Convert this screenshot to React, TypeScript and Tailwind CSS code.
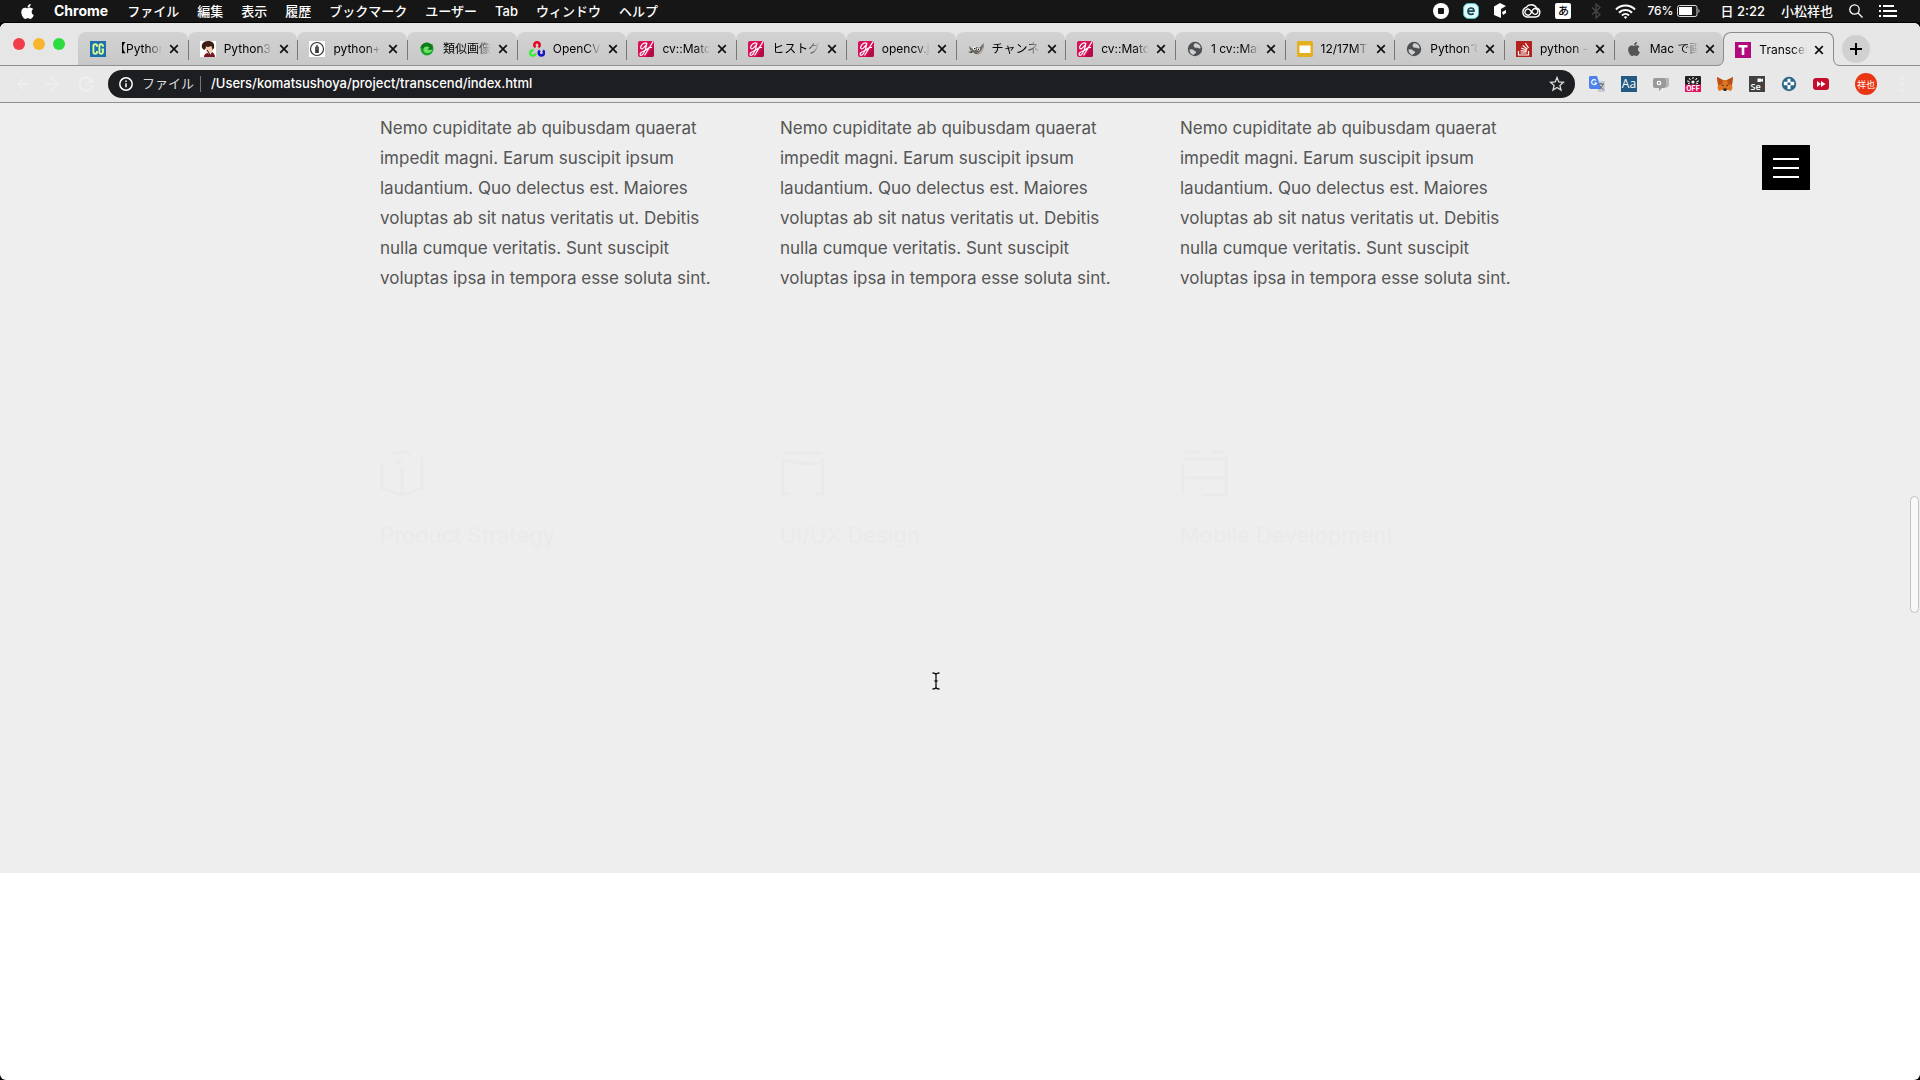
import React from 'react';

const UI = "font-['Inter','Noto_Sans_CJK_JP',sans-serif]";

function AppleMark({ className }: { className: string }) {
  return (
    <svg viewBox="0 0 384 512" className={className} fill="currentColor" aria-hidden="true">
      <path d="M318.7 268.7c-.2-36.7 16.4-64.4 50-84.8-18.8-26.9-47.2-41.7-84.7-44.6-35.5-2.8-74.3 20.7-88.5 20.7-15 0-49.4-19.7-76.4-19.7C63.3 141.2 4 184.8 4 273.5q0 39.3 14.4 81.2c12.8 36.7 59 126.7 107.2 125.2 25.2-.6 43-17.9 75.8-17.9 31.8 0 48.3 17.9 76.4 17.9 48.6-.7 90.4-82.5 102.6-119.3-65.2-30.7-61.7-90-61.7-91.9zm-56.6-164.2c27.3-32.4 24.8-61.9 24-72.5-24.1 1.4-52 16.4-67.9 34.9-17.5 19.8-27.8 44.3-25.6 71.9 26.1 2 49.9-11.4 69.5-34.3z" />
    </svg>
  );
}

const G = () => (
  <svg viewBox="0 0 16 16" className="size-4">
    <rect width="16" height="16" rx="2" fill="#d8105a" />
    <path d="M8 16L16 5v9a2 2 0 0 1-2 2z" fill="#b30a48" />
    <path d="M8.800 2.600C7.500.8 4 2.500 2.800 5.500c-.8 2.500 1.200 3 3 1.200L8.600 3.500C8 7 6.500 12 4 14c-1.800 1.200-2.800-.8-1-2.500C5 10 8 9.500 10 7.500M14.800 1L6.800 14M13.500 6.500c-1.800-.6-3.500.6-4 2.500" fill="none" stroke="#fff" strokeWidth="1.200" strokeLinecap="round" />
  </svg>
);

const Globe = () => (
  <svg viewBox="0 0 16 16" className="size-4">
    <circle cx="8" cy="8" r="7.200" fill="#4c4f54" />
    <path d="M2.500 8.500c2-.6 3.500-.2 4.500 1 .8 1 2.500.5 2 2-.4 1-2 1.500-2.500 2.500C4 13.500 2.300 11 2.500 8.500zM7.500 2.500c2-.6 5 .5 6 3.500.3 1.500-1 2-2 1.200-1-.9-2-.3-3.500-.7C6.500 6 6 4.500 7.500 2.500z" fill="#cfcfcf" />
  </svg>
);

const icons: Record<string, React.ReactNode> = {
  g: <G />,
  globe: <Globe />,
  cg: (
    <svg viewBox="0 0 16 16" className="size-4">
      <rect width="16" height="16" fill="#1c6fa8" />
      <path d="M7 5.800V5a1.800 1.800 0 0 0-3.600 0v6A1.800 1.800 0 0 0 7 11v-1M13 5.800V5a1.800 1.800 0 0 0-3.600 0v6a1.800 1.800 0 0 0 3.600 0V8.500h-1.500" fill="none" stroke="#d8fb9a" strokeWidth="1.900" />
    </svg>
  ),
  face: (
    <svg viewBox="0 0 16 16" className="size-4">
      <rect width="16" height="16" fill="#fff" />
      <path d="M5 5h8v4l-2 3H7z" fill="#f3cdb4" />
      <path d="M2 7c-1-4 1.500-7 6-7s7 2.500 6 7l-1.500 2-1-4L8 6 6 5.500 5.500 8 4 9z" fill="#3e1d14" />
      <path d="M4 16c0-3 2-4 4-4l2 2 2-3c2 1 3 3 3 5z" fill="#7c1620" />
      <path d="M7 9l2 3 1 2" stroke="#2a1414" fill="none" />
    </svg>
  ),
  pen: (
    <svg viewBox="0 0 16 16" className="size-4">
      <rect width="16" height="16" fill="#fff" />
      <circle cx="8" cy="8" r="6.500" fill="none" stroke="#333" strokeWidth="1.200" />
      <path d="M8 3.500l1.800 3V12H6.200V6.500z" fill="#333" />
      <path d="M8 5v4" stroke="#aaa" strokeWidth=".6" />
    </svg>
  ),
  green: (
    <svg viewBox="0 0 16 16" className="size-4">
      <circle cx="8" cy="8" r="6.500" fill="#17a52b" />
      <path d="M1.500 7C2 2.500 8 0 12 3.500l1.500-.5V8.500H8L10.500 6.500C9 5 6 5.500 5 8z" fill="#0e7a1e" />
      <path d="M4.500 7.500c1.500-2.500 4-2.500 6-1L8.500 8.500c2 1 3.500.5 5 0-1 3.500-6 5-8.500 2z" fill="#6fdd63" />
    </svg>
  ),
  opencv: (
    <svg viewBox="0 0 16 16" className="size-4" fill="none" strokeWidth="2.500">
      <path d="M6.500 6.200A2.700 2.700 0 1 1 9.500 6.200" stroke="#e8001c" />
      <path d="M4.600 9.300A2.700 2.700 0 1 0 6.500 12.500" stroke="#35ee35" />
      <path d="M10.800 9.600A2.700 2.700 0 1 0 14 9.600" stroke="#1414c8" />
    </svg>
  ),
  gimp: (
    <svg viewBox="0 0 16 16" className="size-4">
      <path d="M1 5l3 2.500L8 6l4 .5L15.500 2c.5 5-.5 9-4 11-3.500 1-6-.5-7-3L2 9z" fill="#6c675e" />
      <path d="M9 12c3 0 5-3 6-7 .5 4-1 7-4 8z" fill="#bdb9b0" />
      <circle cx="6.500" cy="7.500" r="1.700" fill="#fff" /><circle cx="10.500" cy="8" r="1.500" fill="#fff" />
      <circle cx="6.800" cy="7.600" r=".8" /><circle cx="10.500" cy="8.200" r=".7" />
      <path d="M0 11l5-1-1 2z" fill="#222" />
    </svg>
  ),
  slides: (
    <svg viewBox="0 0 16 16" className="size-4">
      <rect width="16" height="16" rx="1.500" fill="#e5b01f" />
      <rect x="2.500" y="4.500" width="11" height="7.500" fill="#fff" />
    </svg>
  ),
  stack: (
    <svg viewBox="0 0 16 16" className="size-4" fill="none" stroke="#fff" strokeWidth="1.200">
      <rect width="16" height="16" fill="#b3221f" stroke="none" />
      <path d="M2.500 10v4h10v-4M4.500 12h6M4.600 9.600l6 .8M5.200 7l5.600 2.200M6.800 4.500l4.600 3.700M9.300 2l3.200 5" />
    </svg>
  ),
  apple: <AppleMark className="h-4 w-4 text-[#555]" />,
  t: (
    <svg viewBox="0 0 16 16" className="size-4">
      <rect width="16" height="16" fill="#b3097f" />
      <path d="M3.500 3h9v2.500H9.300V13H6.700V5.500H3.500z" fill="#fff" />
    </svg>
  ),
};

const tabs: [string, string][] = [
  ['cg', '【Python'], ['face', 'Python3'], ['pen', 'python+'], ['green', '類似画像'],
  ['opencv', 'OpenCV'], ['g', 'cv::Mato'], ['g', 'ヒストグ'], ['g', 'opencv.j'],
  ['gimp', 'チャンネ'], ['g', 'cv::Mato'], ['globe', '1 cv::Mat'], ['slides', '12/17MT'],
  ['globe', 'Pythonで'], ['stack', 'python -'], ['apple', 'Mac で画'], ['t', 'Transcen'],
];

function MenuBar() {
  const items = ['ファイル', '編集', '表示', '履歴', 'ブックマーク', 'ユーザー', 'Tab', 'ウィンドウ', 'ヘルプ'];
  return (
    <header className="flex h-[23px] items-center border-b border-black bg-[#161616] pr-[23px] pl-5 text-[13px] leading-none font-medium text-white">
      <AppleMark className="mr-[19px] h-[17px] w-[15px]" />
      <nav className="flex items-center gap-[18px]">
        <a href="#chrome" className="mr-px text-sm leading-none font-bold">Chrome</a>
        {items.map((i) => <a key={i} href={'#' + i} className="whitespace-nowrap">{i}</a>)}
      </nav>
      <div className="ml-auto flex items-center">
        <svg viewBox="0 0 16 16" className="mr-3.5 size-4"><circle cx="8" cy="8" r="8" fill="#fff" /><rect x="5" y="5" width="6" height="6" rx="1" fill="#161616" /></svg>
        <svg viewBox="0 0 16 16" className="mr-3.5 size-4">
          <rect x=".5" y=".5" width="15" height="15" rx="5" fill="#dffafa" stroke="#4cc3c9" />
          <path d="M5 8.200h6C11 6 9.800 5 8 5S5 6.300 5 8.200s1.200 3.100 3 3.100c1.200 0 2-.3 2.700-1" fill="none" stroke="#174a52" strokeWidth="1.700" />
        </svg>
        <svg viewBox="0 0 14 16" className="mr-3.5 h-4 w-3.5" fill="#fff"><path d="M7 0l6 3-5 3v9L1 12V3.500zM9 9l4-2v3l-3 2z" /></svg>
        <svg viewBox="0 0 20 14" className="mr-3.5 h-3.5 w-5" fill="none" stroke="#fff" strokeWidth="1.400">
          <path d="M5.800 13a5 5 0 0 1-.6-9.600A6 6 0 0 1 15.500 4 4.600 4.600 0 0 1 14.500 13z" />
          <path d="M9.500 9.800A3 3 0 1 1 8.500 5.500l4 4.300a2.800 2.800 0 1 0-.5-4.300L9.500 9.800" strokeWidth="1.300" />
        </svg>
        <span className="mr-5 grid size-4 place-items-center rounded-xs bg-white text-[11px] leading-none text-black">あ</span>
        <svg viewBox="0 0 10 16" className="mr-3.5 h-4 w-2.5" fill="none" stroke="#4a4a4a" strokeWidth="1.200"><path d="M1 4.500l8 7L5 15V1l4 3.500-8 7" /></svg>
        <svg viewBox="0 0 21 15" className="mr-[11px] h-[15px] w-[21px]" fill="none" stroke="#fff" strokeWidth="2">
          <path d="M1 5.500a13.500 13.500 0 0 1 19 0M4 8.700a9 9 0 0 1 13 0M7 11.500a5 5 0 0 1 7 0" /><path d="M8.800 13l1.700 2 1.700-2a2.500 2.500 0 0 0-3.400 0z" fill="#fff" stroke="none" />
        </svg>
        <span className="mr-[3px] text-xs leading-none">76%</span>
        <svg viewBox="0 0 24 12" className="mr-5 h-3 w-6"><rect x=".5" y=".5" width="19.500" height="11" rx="2" fill="none" stroke="#ddd" /><rect x="2" y="2" width="13" height="8" fill="#fff" /><path d="M21.500 4v4c1.300-.5 1.300-3.500 0-4z" fill="#ddd" /></svg>
        <time className="mr-4 whitespace-nowrap">日 2:22</time>
        <span className="mr-4 whitespace-nowrap">小松祥也</span>
        <svg viewBox="0 0 14 14" className="mr-4 size-3.5" fill="none" stroke="#fff" strokeWidth="1.300"><circle cx="5.500" cy="5.500" r="4.700" /><path d="M9 9l4.500 4.500" /></svg>
        <svg viewBox="0 0 18 12" className="h-3 w-[18px]" fill="none" stroke="#fff" strokeWidth="2"><path d="M0 1h2M4 1h11M0 6h2M4 6h14M0 11h2M4 11h14" /></svg>
      </div>
    </header>
  );
}

function Tab({ icon, title, index }: { icon: string; title: string; index: number }) {
  const active = index === tabs.length - 1;
  return (
    <div className={active
      ? 'relative z-10 -mb-px flex h-[34px] min-w-0 flex-1 items-center rounded-t-lg border border-b-0 border-[#8c8c8c] bg-[#e8e8e8] pl-[11px]'
      : 'relative flex h-[33px] min-w-0 flex-1 items-center rounded-t-lg bg-linear-to-b from-[#d2d2d2] to-[#c8c8c8] pl-3'}>
      {index > 0 && !active && <i className="absolute top-2 left-0 h-5 w-px bg-[#777]" />}
      {active && (
        <>
          <svg viewBox="0 0 7 8" className="absolute bottom-0 -left-[7px] h-2 w-[7px]"><path d="M0 8V7.500Q6.500 7.500 6.500 0H7.500V8z" fill="#e8e8e8" /><path d="M0 7.500Q6.500 7.500 6.500 0" fill="none" stroke="#8c8c8c" /></svg>
          <svg viewBox="0 0 7 8" className="absolute -right-[7px] bottom-0 h-2 w-[7px]"><path d="M7 8V7.500Q.5 7.500 .5 0H-.5V8z" fill="#e8e8e8" /><path d="M7 7.500Q.5 7.500 .5 0" fill="none" stroke="#8c8c8c" /></svg>
        </>
      )}
      <span className="shrink-0">{icons[icon]}</span>
      <button className="ml-2 w-12 overflow-hidden mask-r-from-70% text-left text-xs leading-5 whitespace-nowrap text-black">{title}</button>
      <button aria-label="タブを閉じる" className="ml-[5px] grid size-3.5 place-items-center">
        <svg viewBox="0 0 10 10" className="size-2.5" stroke="#111" strokeWidth="1.700"><path d="M1.200 1.200l7.600 7.600M8.800 1.200L1.200 8.800" /></svg>
      </button>
    </div>
  );
}

function Toolbar() {
  return (
    <div className="flex h-[37px] items-center border-b border-[#8f8f8f] bg-[#e8e8e8] pr-[11px] pl-4">
      <div className="mr-3.5 flex items-center gap-4 text-[#efefef]">
        {['M9 1L2 7l7 6M2 7h12', 'M5 1l7 6-7 6M12 7H0'].map((d, i) => (
          <button key={d} aria-label={i ? '進む' : '戻る'}><svg viewBox="0 0 14 14" className="size-3.5" fill="none" stroke="currentColor" strokeWidth="1.400"><path d={d} /></svg></button>
        ))}
        <button aria-label="再読み込み" className="ml-0.5"><svg viewBox="0 0 16 16" className="size-4" fill="none" stroke="currentColor" strokeWidth="2"><path d="M13.500 4.500A6.500 6.500 0 1 0 14.500 9" /><path d="M14.500 1v6H9z" fill="currentColor" stroke="none" /></svg></button>
      </div>
      <div className="flex h-7 min-w-0 flex-1 items-center rounded-full bg-[#1d1e21] pr-2.5 pl-[11px] text-[13px] text-white">
        <svg viewBox="0 0 14 14" className="mr-[9px] size-3.5" fill="none" stroke="#fff" strokeWidth="1.500"><circle cx="7" cy="7" r="6.200" /><path d="M7 6.200v4M7 3.500V5" /></svg>
        <span className="w-[50px] shrink-0 whitespace-nowrap text-[#ddd]">ファイル</span>
        <i className="mr-2.5 ml-2 h-4 w-px bg-[#777]" />
        <input aria-label="アドレス" defaultValue="/Users/komatsushoya/project/transcend/index.html" className="min-w-0 flex-1 bg-transparent font-medium outline-none" />
        <button aria-label="ブックマーク"><svg viewBox="0 0 16 16" className="size-4" fill="none" stroke="#ddd" strokeWidth="1.300"><path d="M8 1.500l1.800 4.400 4.700.4-3.600 3.100 1.100 4.600L8 11.500 4 14l1.100-4.600L1.500 6.300l4.700-.4z" /></svg></button>
      </div>
      <div className="ml-3.5 flex items-center gap-4">
        <svg viewBox="0 0 16 16" className="size-4">
          <path d="M7 5h8a1 1 0 0 1 1 1v9a1 1 0 0 1-1 1H9z" fill="#c9cdd3" /><path d="M1 0h7l4 13H2a2 2 0 0 1-2-2V1z" fill="#4c82ec" />
          <path d="M7 4.500A2.500 2.500 0 1 0 7.500 7H5.200" fill="none" stroke="#fff" strokeWidth="1.100" /><path d="M9.500 8H15M12 7v1M14 8c-.5 2.500-2 4-3.500 5M11 10l3.500 4" stroke="#596572" fill="none" />
        </svg>
        <svg viewBox="0 0 16 16" className="size-4"><rect width="16" height="16" fill="#235a82" /><text x="8" y="12" textAnchor="middle" fontSize="12" fill="#fff" fontFamily="Open Sans">Aa</text></svg>
        <svg viewBox="0 0 16 16" className="size-4"><path d="M12 2h4v8l-3 2z" fill="#b7b7b7" /><path d="M2 2h9a2 2 0 0 1 2 2v6a2 2 0 0 1-2 2H9l-3 3v-3H2a2 2 0 0 1-2-2V4a2 2 0 0 1 2-2z" fill="#999" /><circle cx="6" cy="7" r="1.700" fill="none" stroke="#fff" strokeWidth="1.200" /></svg>
        <svg viewBox="0 0 16 16" className="size-4"><rect width="16" height="16" rx="1" fill="#222" /><rect y="8.500" width="16" height="7.500" fill="#e2125c" /><path d="M8 1v2M4 2l1.500 2M12 2l-1.500 2M2 5l2.500.5M14 5l-2.500.5M3 7.500l2-.5M13 7.500L11 7" stroke="#fff" /><circle cx="8" cy="6" r="1.600" fill="#fff" /><text x="8" y="15" textAnchor="middle" fontSize="7" fontWeight="700" fill="#fff" fontFamily="Inter">OFF</text></svg>
        <svg viewBox="0 0 16 16" className="size-4"><path d="M0 1l6 3h4l6-3-1 8 .5 3-1.500 3-4-1.200L9 15H7l-1-1.200L2 15 .5 12 1 9z" fill="#df7520" /><path d="M0 1l6 3-1 4-4 1zM16 1l-6 3 1 4 4 1z" fill="#b9501a" /><path d="M6 12.500h4L9 15H7zM4 8.500l2.500.5.200 1.500zM12 8.500L9.500 9l-.2 1.500z" fill="#29221f" /></svg>
        <svg viewBox="0 0 16 16" className="size-4"><rect width="16" height="16" fill="#414141" /><path d="M8.500 2.500h3.500v1l2-1v3.500l-2-1v1H8.500z" fill="#fff" /><text x="1.500" y="14" fontSize="9" fontWeight="600" fill="#fff" fontFamily="Open Sans">Se</text></svg>
        <svg viewBox="0 0 16 16" className="size-4"><circle cx="8" cy="8" r="7.200" fill="#2b6588" /><path d="M6.500 2.800h3v3h3.700v3.400H9.500v4h-3v-4H2.800V5.800h3.700z" fill="#fff" /><path d="M6.500 6.500h3v2.500h-3z" fill="#2b6588" /></svg>
        <svg viewBox="0 0 16 16" className="size-4"><rect y="2" width="16" height="12" rx="3" fill="#c50e2b" /><path d="M4 5l4 3-4 3zM8 5l4.500 3L8 11z" fill="#fff" /></svg>
        <button className="ml-2.5 grid size-[22px] place-items-center rounded-full bg-[#ea3514] text-[9px] leading-none whitespace-nowrap text-white">祥也</button>
        <button aria-label="メニュー" className="flex w-4 flex-col items-center gap-[3px]">{[0, 1, 2].map((n) => <i key={n} className="size-[3px] rounded-full bg-[#efefef]" />)}</button>
      </div>
    </div>
  );
}

const copy = 'Nemo cupiditate ab quibusdam quaerat impedit magni. Earum suscipit ipsum laudantium. Quo delectus est. Maiores voluptas ab sit natus veritatis ut. Debitis nulla cumque veritatis. Sunt suscipit voluptas ipsa in tempora esse soluta sint.';

const services = [
  { title: 'Product Strategy', d: 'M2 14v24l20 7 20-7V7M11 4q11-4 20 0M22 16v29M15 14l7-3' },
  { title: 'UI/UX Design', d: 'M4 3h38M3 8v36h8M43 8v36h-8M3 10q20 5 38 3' },
  { title: 'Mobile Development', d: 'M5 2h15M30 2h15M3 14v30M46 6v39H22M5 28h41M5 9h40' },
];

export default function App() {
  return (
    <div className={`${UI} flex min-h-screen flex-col bg-black`}>
      <MenuBar />
      <div className="flex flex-1 flex-col overflow-hidden rounded-md bg-white">
        <div className="flex h-[43px] items-end border-b border-[#8f8f8f] bg-[#e6e6e6]">
          <div className="flex w-[78px] shrink-0 gap-2 self-center pl-[13px]">
            <button aria-label="閉じる" className="size-3 rounded-full bg-[#f23c4b]" />
            <button aria-label="最小化" className="size-3 rounded-full bg-[#f9b52c]" />
            <button aria-label="最大化" className="size-3 rounded-full bg-[#2cdc41]" />
          </div>
          <div className="flex min-w-0 flex-1">
            {tabs.map(([icon, title], i) => <Tab key={i} icon={icon} title={title} index={i} />)}
          </div>
          <button aria-label="新しいタブ" className="mr-[50px] mb-0.5 ml-2 grid size-7 place-items-center rounded-full bg-[#d0d0d0]">
            <svg viewBox="0 0 12 12" className="size-3" stroke="#000" strokeWidth="2"><path d="M6 0v12M0 6h12" /></svg>
          </button>
        </div>
        <Toolbar />
        <main className="relative bg-[#eee] pb-[322px]">
          <section className="mx-auto grid w-[1160px] grid-cols-[repeat(3,340px)] gap-[60px] pt-2.5">
            {services.map((s) => (
              <p key={s.title} className="text-[17px] leading-[30px] text-[#555]">{copy}</p>
            ))}
          </section>
          <section className="mx-auto grid w-[1160px] grid-cols-[repeat(3,340px)] gap-[60px] pt-[157px]">
            {services.map((s) => (
              <div key={s.title} className="text-[#eaeaea]">
                <svg viewBox="0 0 48 48" className="size-12" fill="none" stroke="currentColor" strokeWidth="3"><path d={s.d} /></svg>
                <h3 className="mt-[21px] text-[22px] leading-8">{s.title}</h3>
              </div>
            ))}
          </section>
          <button aria-label="メニューを開く" className="absolute top-[42px] right-[110px] flex h-[45px] w-12 flex-col items-center justify-center gap-[7px] bg-black">
            {[0, 1, 2].map((n) => <i key={n} className="h-0.5 w-[26px] bg-white" />)}
          </button>
          <i className="absolute top-[393px] right-px h-[117px] w-[9px] rounded-full border border-[#c2c2c2] bg-[#f8f8f8]" />
          <svg viewBox="0 0 8 18" className="absolute top-[569px] left-[932px] h-[18px] w-2" fill="none" stroke="#111" strokeWidth="1.300"><path d="M.5 1Q4 1 4 3Q4 1 7.500 1M4 2v14M.5 17Q4 17 4 15Q4 17 7.500 17M2.500 9h3" /></svg>
        </main>
      </div>
    </div>
  );
}
